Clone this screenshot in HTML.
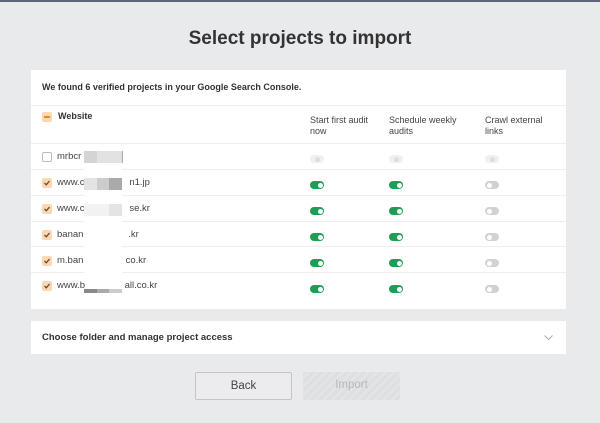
<!DOCTYPE html>
<html><head><style>
*{margin:0;padding:0;box-sizing:border-box}
body{width:600px;height:423px;background:#e9eaec;font-family:"Liberation Sans",sans-serif;position:relative;overflow:hidden;color:#333}
.top{position:absolute;left:0;top:0;width:600px;height:2px;background:#5d6679}
h1{position:absolute;top:28px;width:600px;text-align:center;font-size:19px;font-weight:bold;color:#333}
.card{position:absolute;left:31px;top:70px;width:535px;height:239px;background:#fff}
.card2{position:absolute;left:31px;top:321px;width:535px;height:33px;background:#fff}
.abs{position:absolute}
.t{font-size:9.5px;color:#444}
.b{font-weight:bold;color:#333}
.line{position:absolute;left:0;width:535px;height:1px;background:#eee}
.cb{position:absolute;width:10px;height:10px;border-radius:2px;background:#fbd7b3}
.cb.e{background:#fff;border:1px solid #bbb}
.cb svg{position:absolute;left:1px;top:1px}
.tg{position:absolute;width:14px;height:8px;border-radius:4px;background:#1e9e55}
.tg::after{content:"";position:absolute;right:1.5px;top:1.5px;width:5px;height:5px;border-radius:50%;background:#fff}
.tg.off{background:#d2d2d2}
.tg.off::after{left:1.5px;right:auto}
.tg.dis{background:#f0f0f0}
.tg.dis::after{background:#ddd;left:4.5px}
.blur{position:absolute;background:#e6e6e6}
.btn{position:absolute;top:372px;width:97px;height:28px;font-size:11.5px;text-align:center;line-height:27px;border-radius:2px}
</style></head><body>
<div class="top"></div>
<h1>Select projects to import</h1>
<div class="card">
 <div class="abs t b" style="left:11px;top:12px;font-size:9px">We found 6 verified projects in your Google Search Console.</div>
 <div class="line" style="top:35px"></div>
 <div class="cb" style="left:11px;top:42px"><div style="position:absolute;left:2px;top:4px;width:6px;height:1.5px;background:#e58a2e"></div></div>
 <div class="abs t b" style="left:27px;top:41px;font-size:9px">Website</div>
 <div class="abs t" style="left:279px;top:45px;font-size:9px;line-height:11px">Start first audit<br>now</div>
 <div class="abs t" style="left:358px;top:45px;font-size:9px;line-height:11px">Schedule weekly<br>audits</div>
 <div class="abs t" style="left:454px;top:45px;font-size:9px;line-height:11px">Crawl external<br>links</div>
 <div class="line" style="top:73px"></div>
 <div class="line" style="top:99px"></div>
 <div class="line" style="top:125px"></div>
 <div class="line" style="top:151px"></div>
 <div class="line" style="top:176px"></div>
 <div class="line" style="top:202px"></div>
 <div class="blur" style="left:53px;top:80px;width:38px;height:142px;background:#fff"></div>

 <div class="cb e" style="left:11px;top:82px"></div>
 <div class="abs t" style="left:26px;top:81px">mrbcr</div>
 <div class="tg dis" style="left:279px;top:85px"></div><div class="tg dis" style="left:358px;top:85px"></div><div class="tg dis" style="left:454px;top:85px"></div>

 <div class="cb" style="left:11px;top:108px"><svg width="8" height="8"><path d="M1.5 4 L3.3 5.8 L6.5 2" stroke="#6b4a2a" stroke-width="1.3" fill="none"/></svg></div>
 <div class="abs t" style="left:26px;top:107px">www.c&nbsp;&nbsp;&nbsp;&nbsp;&nbsp;&nbsp;&nbsp;&nbsp;&nbsp;&nbsp;&nbsp;&nbsp;&nbsp;&nbsp;&nbsp;&nbsp;&nbsp;n1.jp</div>
 <div class="tg" style="left:279px;top:111px"></div><div class="tg" style="left:358px;top:111px"></div><div class="tg off" style="left:454px;top:111px"></div>

 <div class="cb" style="left:11px;top:134px"><svg width="8" height="8"><path d="M1.5 4 L3.3 5.8 L6.5 2" stroke="#6b4a2a" stroke-width="1.3" fill="none"/></svg></div>
 <div class="abs t" style="left:26px;top:133px">www.c&nbsp;&nbsp;&nbsp;&nbsp;&nbsp;&nbsp;&nbsp;&nbsp;&nbsp;&nbsp;&nbsp;&nbsp;&nbsp;&nbsp;&nbsp;&nbsp;&nbsp;se.kr</div>
 <div class="tg" style="left:279px;top:137px"></div><div class="tg" style="left:358px;top:137px"></div><div class="tg off" style="left:454px;top:137px"></div>

 <div class="cb" style="left:11px;top:160px"><svg width="8" height="8"><path d="M1.5 4 L3.3 5.8 L6.5 2" stroke="#6b4a2a" stroke-width="1.3" fill="none"/></svg></div>
 <div class="abs t" style="left:26px;top:159px">banan&nbsp;&nbsp;&nbsp;&nbsp;&nbsp;&nbsp;&nbsp;&nbsp;&nbsp;&nbsp;&nbsp;&nbsp;&nbsp;&nbsp;&nbsp;&nbsp;&nbsp;.kr</div>
 <div class="tg" style="left:279px;top:163px"></div><div class="tg" style="left:358px;top:163px"></div><div class="tg off" style="left:454px;top:163px"></div>

 <div class="cb" style="left:11px;top:186px"><svg width="8" height="8"><path d="M1.5 4 L3.3 5.8 L6.5 2" stroke="#6b4a2a" stroke-width="1.3" fill="none"/></svg></div>
 <div class="abs t" style="left:26px;top:185px">m.ban&nbsp;&nbsp;&nbsp;&nbsp;&nbsp;&nbsp;&nbsp;&nbsp;&nbsp;&nbsp;&nbsp;&nbsp;&nbsp;&nbsp;&nbsp;&nbsp;co.kr</div>
 <div class="tg" style="left:279px;top:189px"></div><div class="tg" style="left:358px;top:189px"></div><div class="tg off" style="left:454px;top:189px"></div>

 <div class="cb" style="left:11px;top:211px"><svg width="8" height="8"><path d="M1.5 4 L3.3 5.8 L6.5 2" stroke="#6b4a2a" stroke-width="1.3" fill="none"/></svg></div>
 <div class="abs t" style="left:26px;top:210px">www.b&nbsp;&nbsp;&nbsp;&nbsp;&nbsp;&nbsp;&nbsp;&nbsp;&nbsp;&nbsp;&nbsp;&nbsp;&nbsp;&nbsp;&nbsp;all.co.kr</div>
 <div class="tg" style="left:279px;top:215px"></div><div class="tg" style="left:358px;top:215px"></div><div class="tg off" style="left:454px;top:215px"></div>

 <div class="blur" style="left:53px;top:81px;width:38px;height:12px;background:#e2e2e2"></div>
 <div class="blur" style="left:53px;top:81px;width:13px;height:12px;background:#d4d4d4"></div>
 <div class="blur" style="left:91px;top:81px;width:1px;height:12px;background:#aaa"></div>
 <div class="blur" style="left:53px;top:108px;width:38px;height:12px;background:#e3e3e3"></div>
 <div class="blur" style="left:66px;top:108px;width:12px;height:12px;background:#ccc"></div>
 <div class="blur" style="left:78px;top:108px;width:13px;height:12px;background:#aaa"></div>
 <div class="blur" style="left:53px;top:134px;width:38px;height:12px;background:#f2f2f2"></div>
 <div class="blur" style="left:78px;top:134px;width:13px;height:12px;background:#e4e4e4"></div>
 <div class="blur" style="left:53px;top:219px;width:13px;height:4px;background:#888"></div>
 <div class="blur" style="left:66px;top:219px;width:12px;height:4px;background:#aaa"></div>
 <div class="blur" style="left:78px;top:219px;width:13px;height:4px;background:#ccc"></div>
</div>
<div class="card2">
 <div class="abs t b" style="left:11px;top:11px;font-size:9.5px">Choose folder and manage project access</div>
 <svg class="abs" style="left:513px;top:14px" width="9" height="6"><path d="M0.5 0.5 L4.5 4.5 L8.5 0.5" stroke="#aaa" fill="none"/></svg>
</div>
<div class="btn" style="left:195px;border:1px solid #c4c4c4;color:#444;background:#ececee">Back</div>
<div class="btn" style="left:303px;color:#b8b8b8;background:repeating-linear-gradient(135deg,#dedfe1 0 3px,#e3e4e6 3px 6px)">Import</div>
</body></html>
